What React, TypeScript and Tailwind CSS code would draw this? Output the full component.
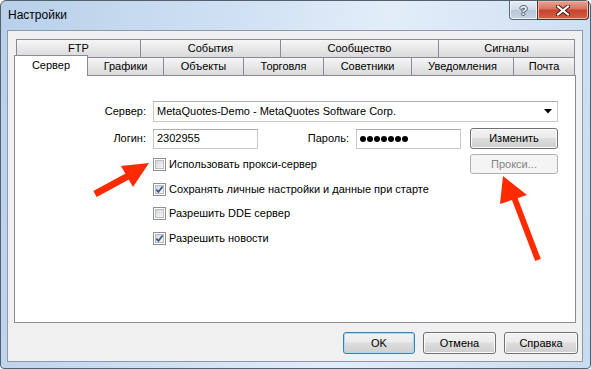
import React from "react";

function Check({ checked }: { checked?: boolean }) {
  return (
    <span className="relative flex h-[13px] w-[13px] shrink-0 border border-[#8f8f8f] bg-white p-[1px]">
      <span className="flex-1 border border-[#b9bdc3] bg-[linear-gradient(135deg,#d3d6db,#f6f6f6)]" />
      {checked && (
        <svg className="absolute left-[0px] top-[0px]" width="11" height="11" viewBox="0 0 11 11">
          <path d="M2.3 5.6 L4.4 7.9 L8.6 2.4" fill="none" stroke="#3d5494" strokeWidth="1.7" />
        </svg>
      )}
    </span>
  );
}

const btn =
  "flex items-center justify-center rounded-[3px] border border-[#707070] bg-[linear-gradient(#f2f2f2,#ebebeb_45%,#dddddd_50%,#cfcfcf)] shadow-[inset_0_0_0_1px_#fbfbfb] text-black";

export default function App() {
  return (
    <div
      className="h-[369px] w-[591px] overflow-hidden bg-white text-[11px] text-black"
      style={{ fontFamily: '"Liberation Sans", Arial, sans-serif' }}
    >
      <div className="flex h-[369px] w-[591px] flex-col rounded-[6px_6px_4px_4px] border border-[#56606d] bg-[linear-gradient(100deg,#b8d0ea_0%,#cfe0f3_35%,#e2edf9_60%,#c9dbf0_100%)]">
        {/* title bar */}
        <div className="flex h-[29px] items-start">
          <div className="flex h-[29px] items-center pb-[1px] pl-[7px] text-[12px]">Настройки</div>
          <div className="ml-auto mr-[1px] flex h-[19px]">
            <div className="flex w-[29px] items-center justify-center rounded-bl-[4px] border border-t-0 border-[#5a6878] bg-[linear-gradient(#e6edf6,#cdd9e7_50%,#b7c6d9_51%,#c6d4e4)] shadow-[inset_0_0_0_1px_#eef3f9]">
              <span className="text-[13px] font-bold leading-none text-[#f5f7fa] [text-shadow:0_0_1px_#3b4657,1px_0_0_#56637a,-1px_0_0_#56637a,0_1px_0_#56637a,0_-1px_0_#56637a]">
                ?
              </span>
            </div>
            <div className="-ml-px flex w-[52px] items-center justify-center rounded-br-[4px] border border-t-0 border-[#5e2a24] bg-[linear-gradient(#e8a496,#d7725f_45%,#c8422c_50%,#d4604a)] shadow-[inset_0_0_0_1px_#ecb3a6]">
              <svg width="14" height="11" viewBox="0 0 14 11">
                <path d="M2 1.5 L12 9.5 M12 1.5 L2 9.5" stroke="#4a1a14" strokeWidth="4" strokeLinecap="square" />
                <path d="M2 1.5 L12 9.5 M12 1.5 L2 9.5" stroke="#ffffff" strokeWidth="2" strokeLinecap="square" />
              </svg>
            </div>
          </div>
        </div>

        {/* client */}
        <div className="ml-[6px] flex h-[332px] w-[576px] flex-col border border-[#8e9aab] bg-[#f0f0f0] pl-[6px] pt-[8px]">
          {/* top tab row */}
          <div className="ml-[2px] flex h-[18px]">
            <div className="flex w-[125px] items-center justify-center border border-b-0 border-[#898c95] bg-[linear-gradient(#f5f5f5,#e8e8e8_50%,#dadada)] pb-[1px]">FTP</div>
            <div className="-ml-px flex w-[141px] items-center justify-center border border-b-0 border-[#898c95] bg-[linear-gradient(#f5f5f5,#e8e8e8_50%,#dadada)] pb-[1px]">События</div>
            <div className="-ml-px flex w-[159px] items-center justify-center border border-b-0 border-[#898c95] bg-[linear-gradient(#f5f5f5,#e8e8e8_50%,#dadada)] pb-[1px]">Сообщество</div>
            <div className="-ml-px flex w-[137px] items-center justify-center border border-b-0 border-[#898c95] bg-[linear-gradient(#f5f5f5,#e8e8e8_50%,#dadada)] pb-[1px]">Сигналы</div>
          </div>
          {/* bottom tab row */}
          <div className="relative z-10 flex h-[18px] items-start">
            <div className="-mt-[2px] flex h-[21px] w-[74px] items-center justify-center border border-b-0 border-[#898c95] bg-white pb-[2px]">Сервер</div>
            <div className="-ml-px flex h-[18px] w-[77px] items-center justify-center border border-b-0 border-[#898c95] bg-[linear-gradient(#f5f5f5,#e8e8e8_50%,#dadada)]">Графики</div>
            <div className="-ml-px flex h-[18px] w-[81px] items-center justify-center border border-b-0 border-[#898c95] bg-[linear-gradient(#f5f5f5,#e8e8e8_50%,#dadada)]">Объекты</div>
            <div className="-ml-px flex h-[18px] w-[81px] items-center justify-center border border-b-0 border-[#898c95] bg-[linear-gradient(#f5f5f5,#e8e8e8_50%,#dadada)]">Торговля</div>
            <div className="-ml-px flex h-[18px] w-[89px] items-center justify-center border border-b-0 border-[#898c95] bg-[linear-gradient(#f5f5f5,#e8e8e8_50%,#dadada)]">Советники</div>
            <div className="-ml-px flex h-[18px] w-[103px] items-center justify-center border border-b-0 border-[#898c95] bg-[linear-gradient(#f5f5f5,#e8e8e8_50%,#dadada)]">Уведомления</div>
            <div className="-ml-px flex h-[18px] w-[62px] items-center justify-center border border-b-0 border-[#898c95] bg-[linear-gradient(#f5f5f5,#e8e8e8_50%,#dadada)]">Почта</div>
          </div>

          {/* panel */}
          <div className="flex h-[248px] w-[562px] flex-col border border-[#898c95] bg-white pr-[17px] pt-[25px]">
            {/* server row */}
            <div className="flex h-[21px] items-center">
              <div className="w-[131px] text-right">Сервер:</div>
              <div className="ml-[7px] flex h-[21px] flex-1 items-center justify-between border border-[#c5c8ce] border-t-[#abadb3] bg-white pl-[3px] pr-[5px]">
                <span>MetaQuotes-Demo - MetaQuotes Software Corp.</span>
                <svg width="8" height="5" viewBox="0 0 8 5">
                  <path d="M0 0 H8 L4 4.5 Z" fill="#000" />
                </svg>
              </div>
            </div>

            {/* login row */}
            <div className="mt-[6px] flex h-[21px] items-center">
              <div className="w-[131px] text-right">Логин:</div>
              <div className="ml-[7px] flex h-[20px] w-[105px] items-center border border-[#c5c8ce] border-t-[#abadb3] bg-white pl-[3px]">2302955</div>
              <div className="w-[91px] text-right">Пароль:</div>
              <div className="ml-[7px] flex h-[20px] w-[105px] items-center gap-[1px] border border-[#c5c8ce] border-t-[#abadb3] bg-white pl-[3px]">
                <span className="h-[6px] w-[6px] rounded-full bg-black" />
                <span className="h-[6px] w-[6px] rounded-full bg-black" />
                <span className="h-[6px] w-[6px] rounded-full bg-black" />
                <span className="h-[6px] w-[6px] rounded-full bg-black" />
                <span className="h-[6px] w-[6px] rounded-full bg-black" />
                <span className="h-[6px] w-[6px] rounded-full bg-black" />
                <span className="h-[6px] w-[6px] rounded-full bg-black" />
              </div>
              <div className={`ml-auto h-[21px] w-[88px] ${btn}`}>Изменить</div>
            </div>

            {/* checkbox rows */}
            <div className="ml-[138px] mt-[5px] flex h-[20px] items-center">
              <Check />
              <span className="ml-[3px]">Использовать прокси-сервер</span>
              <div className="ml-auto flex h-[20px] w-[88px] items-center justify-center rounded-[3px] border border-[#adb2b5] bg-[#f4f4f4] text-[#838383]">
                Прокси...
              </div>
            </div>
            <div className="ml-[138px] mt-[5px] flex h-[20px] items-center">
              <Check checked />
              <span className="ml-[3px]">Сохранять личные настройки и данные при старте</span>
            </div>
            <div className="ml-[138px] mt-[4px] flex h-[20px] items-center">
              <Check />
              <span className="ml-[3px]">Разрешить DDE сервер</span>
            </div>
            <div className="ml-[138px] mt-[5px] flex h-[20px] items-center">
              <Check checked />
              <span className="ml-[3px]">Разрешить новости</span>
            </div>
          </div>

          {/* bottom buttons */}
          <div className="mt-[9px] flex h-[22px] justify-end gap-[8px] pr-[4px]">
            <div className="flex w-[72px] items-center justify-center rounded-[3px] border border-[#3c7fb1] bg-[linear-gradient(#f2f2f2,#ebebeb_45%,#dddddd_50%,#cfcfcf)] shadow-[inset_0_0_0_1px_#a8dcf5]">
              OK
            </div>
            <div className={`w-[73px] ${btn}`}>Отмена</div>
            <div className={`w-[74px] ${btn}`}>Справка</div>
          </div>
        </div>
      </div>

      {/* annotation arrows */}
      <svg className="pointer-events-none absolute left-0 top-0" width="591" height="369" viewBox="0 0 591 369">
        <line x1="95" y1="194" x2="130" y2="175" stroke="#ff2a00" strokeWidth="7" />
        <polygon points="149,163 121,166 133,187" fill="#ff2a00" />
        <line x1="538" y1="260" x2="514" y2="197" stroke="#ff2a00" strokeWidth="6" />
        <polygon points="503,176 500,204 527,195" fill="#ff2a00" />
      </svg>
    </div>
  );
}
